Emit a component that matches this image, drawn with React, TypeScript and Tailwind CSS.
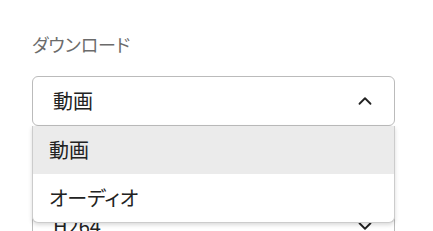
import { ChevronDown, ChevronUp } from "lucide-react";

const font = {
  fontFamily: '"Noto Sans CJK JP", "Noto Sans", sans-serif',
  fontFeatureSettings: '"palt"',
};

export default function App() {
  return (
    <div className="w-[433px] h-[231px] overflow-hidden bg-white pt-8 pl-8" style={font}>
      <div className="flex w-[363px] flex-col">
        <label className="text-[18px] leading-6 text-[#6b6b6b] mb-5">ダウンロード</label>
        <div className="relative z-10">
          <div className="flex h-[50px] items-center justify-between rounded-md border border-[#bbb] bg-white pl-5 pr-[18px] text-[20px] text-[#222]">
            <span>動画</span>
            <ChevronUp className="h-[22px] w-[22px]" strokeWidth={2} />
          </div>
          <ul className="absolute left-0 right-0 top-full rounded-b-md border border-t-0 border-[#ccc] bg-white shadow-[0_2px_4px_rgba(0,0,0,0.15)] text-[20px] text-[#222]">
            <li className="flex h-12 items-center bg-[#ebebeb] px-4">動画</li>
            <li className="flex h-12 items-center px-4">オーディオ</li>
          </ul>
        </div>
      </div>
      <div className="mt-[31px] flex w-[363px] flex-col">
        <label className="text-[18px] leading-6 text-[#6b6b6b] mb-5">コーデック</label>
        <div className="flex h-[50px] items-center justify-between rounded-md border border-[#bbb] bg-white pl-5 pr-[18px] text-[20px] text-[#222]">
          <span>H264</span>
          <ChevronDown className="h-[22px] w-[22px]" strokeWidth={2} />
        </div>
      </div>
    </div>
  );
}
